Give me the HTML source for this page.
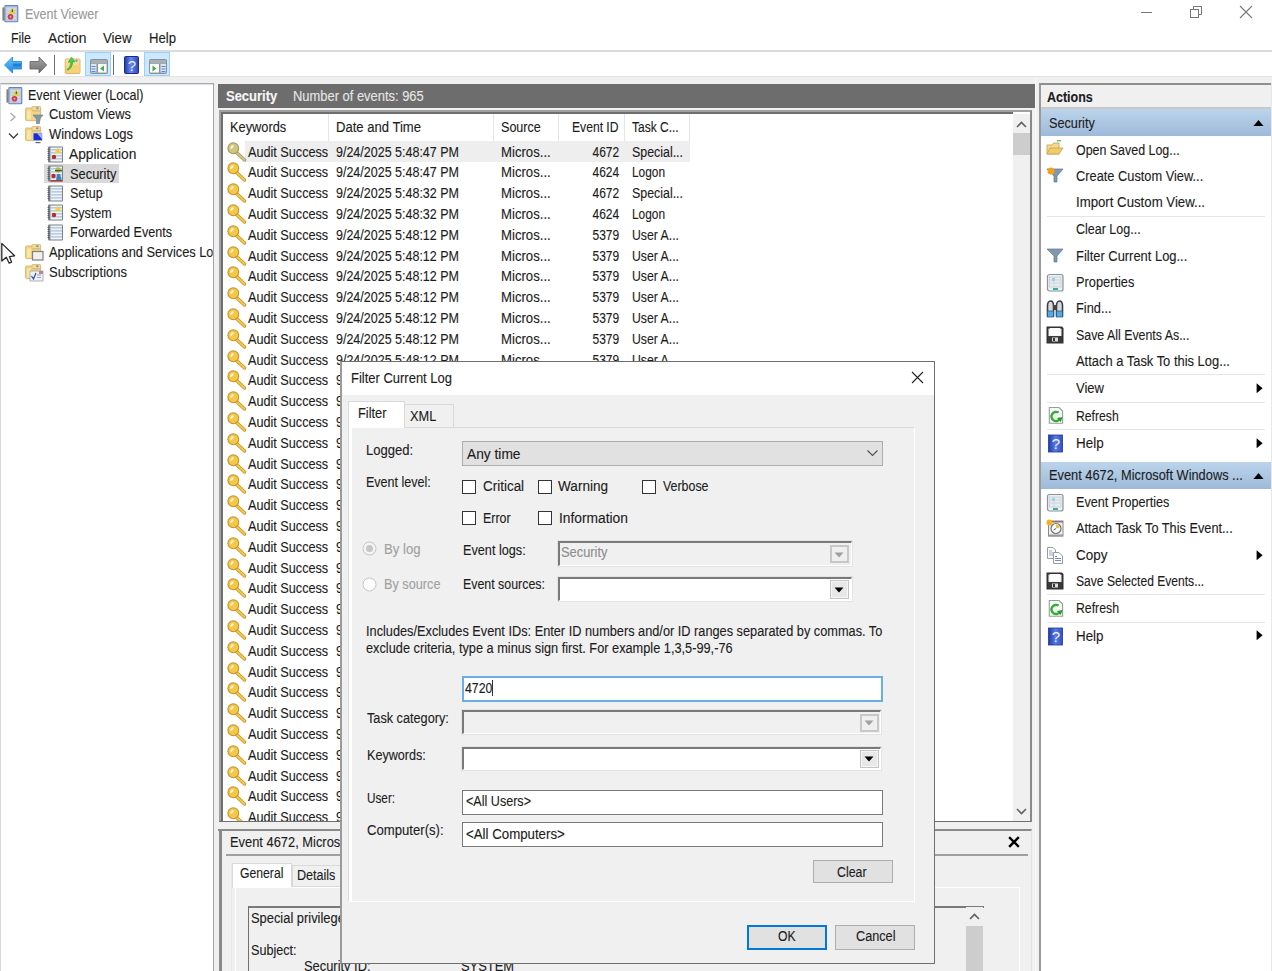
<!DOCTYPE html><html><head><meta charset="utf-8"><style>
*{margin:0;padding:0;box-sizing:border-box}
html,body{width:1272px;height:971px;overflow:hidden;background:#fff}
body{position:relative;font-family:"Liberation Sans",sans-serif;font-size:14px;color:#1c1c1c}
.t{position:absolute;white-space:nowrap;line-height:16px;transform-origin:0 0;-webkit-text-stroke:0.12px currentColor}
.r{position:absolute}
</style></head><body>
<svg class="r" style="left:2px;top:5px;" width="17" height="18" viewBox="0 0 17 18"><rect x="2.8" y="0.6" width="13" height="16.2" rx="0.8" fill="#b8cce6" stroke="#6a80b8" stroke-width="1.1"/><path d="M4.5 4 H14 M4.5 7 H14 M4.5 10 H14 M4.5 13 H14" stroke="#dce8f4" stroke-width="1"/><rect x="0.5" y="2" width="2.5" height="14" fill="#a8a8a8"/><path d="M0.5 4 h2 M0.5 6 h2 M0.5 8 h2 M0.5 10 h2 M0.5 12 h2 M0.5 14 h2" stroke="#444" stroke-width="0.8"/><path d="M10.3 2.3 L13.8 8.6 H6.9Z" fill="#ecd020"/><path d="M10.3 4.5 V7" stroke="#333" stroke-width="1"/><circle cx="8.5" cy="11.8" r="2.8" fill="#d83838"/><circle cx="8.5" cy="11.8" r="1" fill="#f0b0b0"/></svg>
<div class="t" style="left:25px;top:6px;transform:scaleX(0.8938);color:#999;">Event Viewer</div>
<div class="r" style="left:1141px;top:12px;width:11px;height:1px;background:#777"></div>
<svg class="r" style="left:1189px;top:5px;" width="14" height="14" viewBox="0 0 14 14"><rect x="1.5" y="4.5" width="8" height="8" fill="none" stroke="#777"/><path d="M4.5 4.5 V1.5 H12.5 V9.5 H9.5" fill="none" stroke="#777"/></svg>
<svg class="r" style="left:1239px;top:5px;" width="14" height="14" viewBox="0 0 14 14"><path d="M1 1 L13 13 M13 1 L1 13" stroke="#777" stroke-width="1.1"/></svg>
<div class="t" style="left:11px;top:30px;transform:scaleX(0.8864);">File</div>
<div class="t" style="left:47.5px;top:30px;transform:scaleX(0.9892);">Action</div>
<div class="t" style="left:103px;top:30px;transform:scaleX(0.9470);">View</div>
<div class="t" style="left:148.5px;top:30px;transform:scaleX(0.9376);">Help</div>
<div class="r" style="left:0px;top:50px;width:1272px;height:2px;background:#dadbdc"></div>
<svg class="r" style="left:3px;top:55px;" width="21" height="19" viewBox="0 0 21 19"><defs><linearGradient id="gb" x1="0" y1="0" x2="0" y2="1"><stop offset="0" stop-color="#6cc4fa"/><stop offset="1" stop-color="#1a86e0"/></linearGradient></defs><path d="M1.6 10 L9.5 2 V6.5 H18.5 V14 H9.5 V18 Z" fill="url(#gb)" stroke="#2a8ee0" stroke-width="0.9" stroke-linejoin="round"/><rect x="10" y="8.5" width="8" height="3" fill="#0a68c8" opacity="0.6"/></svg>
<svg class="r" style="left:28px;top:55px;" width="21" height="19" viewBox="0 0 21 19"><defs><linearGradient id="gg" x1="0" y1="0" x2="0" y2="1"><stop offset="0" stop-color="#a8a8a8"/><stop offset="1" stop-color="#6c6c6c"/></linearGradient></defs><path d="M18.7 10 L11 2 V6.5 H2 V14 H11 V18 Z" fill="url(#gg)" stroke="#6a6a6a" stroke-width="0.9" stroke-linejoin="round"/></svg>
<div class="r" style="left:54px;top:55px;width:1px;height:20px;background:#6d6d6d"></div>
<svg class="r" style="left:64px;top:55px;" width="18" height="20" viewBox="0 0 18 20"><defs><linearGradient id="gf" x1="0" y1="0" x2="0" y2="1"><stop offset="0" stop-color="#fbe6a8"/><stop offset="1" stop-color="#eec868"/></linearGradient></defs><rect x="1.2" y="4" width="14.8" height="14.5" rx="1" fill="url(#gf)" stroke="#d8b060" stroke-width="0.9"/><path d="M9 10 H15.5 V18 H3Z" fill="#f5d27a"/><path d="M3 14.5 C5 13.5 6.5 11 7 7 L4.3 7.3 L7.6 2.3 L11 6.8 L8.6 6.9 C8.4 11.5 6.5 14 3.5 15.2Z" fill="#4cd040" stroke="#30a830" stroke-width="0.7"/><circle cx="12.5" cy="5.7" r="1.2" fill="#7aa0d0"/></svg>
<div class="r" style="left:85px;top:52px;width:26px;height:24px;background:#cce8ff;border:1px solid #99d1ff"></div>
<svg class="r" style="left:89.5px;top:58.5px;" width="18" height="15" viewBox="0 0 18 15"><rect x="0.5" y="0.5" width="17" height="14" rx="1" fill="#9aa2aa" stroke="#8a9098"/><rect x="1" y="1" width="16" height="3.5" fill="#a6aeb6"/><rect x="1" y="5" width="6" height="8.5" fill="#dfe4ee"/><rect x="6.5" y="5" width="1.5" height="8.5" fill="#8a9098"/><rect x="8" y="5" width="8.5" height="8.5" fill="#fafafa"/><path d="M14 6.5 L10 9.5 L14 12.5Z" fill="#40b040"/><path d="M1.5 7.5 h4" stroke="#4a90d8" stroke-width="1"/><path d="M1.5 10 h4" stroke="#4a90d8" stroke-width="1"/><path d="M1.5 12.5 h4" stroke="#4a90d8" stroke-width="1"/></svg>
<div class="r" style="left:113px;top:55px;width:1px;height:20px;background:#6d6d6d"></div>
<svg class="r" style="left:123.5px;top:56px;" width="15" height="18" viewBox="0 0 15 18"><defs><linearGradient id="gh" x1="0" y1="0" x2="1" y2="0"><stop offset="0" stop-color="#1c3aa8"/><stop offset="0.45" stop-color="#6a88e8"/><stop offset="1" stop-color="#2a48c0"/></linearGradient></defs><rect x="0.5" y="0.5" width="14" height="17" rx="1" fill="url(#gh)" stroke="#1a2c88"/><text x="7.8" y="14.5" font-size="15" font-family="Liberation Sans" fill="#e8eeff" text-anchor="middle">?</text></svg>
<div class="r" style="left:144px;top:52px;width:26px;height:24px;background:#cce8ff;border:1px solid #99d1ff"></div>
<svg class="r" style="left:148.5px;top:58.5px;" width="18" height="15" viewBox="0 0 18 15"><rect x="0.5" y="0.5" width="17" height="14" rx="1" fill="#9aa2aa" stroke="#8a9098"/><rect x="1" y="1" width="16" height="3.5" fill="#a6aeb6"/><rect x="1" y="5" width="9" height="8.5" fill="#fafafa"/><rect x="10" y="5" width="1.5" height="8.5" fill="#8a9098"/><rect x="11.5" y="5" width="5.5" height="8.5" fill="#dfe4ee"/><path d="M3.5 6.5 L7.5 9.5 L3.5 12.5Z" fill="#40b040"/><path d="M12.5 7.5 h4" stroke="#4a90d8" stroke-width="1"/><path d="M12.5 10 h4" stroke="#4a90d8" stroke-width="1"/><path d="M12.5 12.5 h4" stroke="#4a90d8" stroke-width="1"/></svg>
<div class="r" style="left:0px;top:76px;width:1272px;height:1px;background:#e3e3e3"></div>
<div class="r" style="left:0px;top:77px;width:1272px;height:894px;background:#f0f0f0"></div>
<div class="r" style="left:0px;top:83px;width:214px;height:888px;background:#fff;border-top:1px solid #a6abb2;border-left:1px solid #d6d8db;border-right:1px solid #a0a4ab"></div>
<div class="r" style="left:1px;top:84px;width:212px;height:1px;background:#dfe1e4"></div>
<svg class="r" style="left:6px;top:87px;" width="17" height="18" viewBox="0 0 17 18"><rect x="2.8" y="0.6" width="13" height="16.2" rx="0.8" fill="#b8cce6" stroke="#6a80b8" stroke-width="1.1"/><path d="M4.5 4 H14 M4.5 7 H14 M4.5 10 H14 M4.5 13 H14" stroke="#dce8f4" stroke-width="1"/><rect x="0.5" y="2" width="2.5" height="14" fill="#a8a8a8"/><path d="M0.5 4 h2 M0.5 6 h2 M0.5 8 h2 M0.5 10 h2 M0.5 12 h2 M0.5 14 h2" stroke="#444" stroke-width="0.8"/><path d="M10.3 2.3 L13.8 8.6 H6.9Z" fill="#ecd020"/><path d="M10.3 4.5 V7" stroke="#333" stroke-width="1"/><circle cx="8.5" cy="11.8" r="2.8" fill="#d83838"/><circle cx="8.5" cy="11.8" r="1" fill="#f0b0b0"/></svg>
<div class="t" style="left:28px;top:87px;transform:scaleX(0.8959);">Event Viewer (Local)</div>
<svg class="r" style="left:9px;top:112px;" width="8" height="10" viewBox="0 0 8 10"><path d="M1.5 1 L6 5 L1.5 9" fill="none" stroke="#a6a6a6" stroke-width="1.3"/></svg>
<svg class="r" style="left:25px;top:106px;" width="20" height="19" viewBox="0 0 20 19"><rect x="0.6" y="2" width="15" height="12.6" rx="1" fill="#f2d483" stroke="#d8b468" stroke-width="0.9"/><rect x="2" y="4.5" width="4" height="9" fill="#f8e6a8"/><rect x="7" y="0.5" width="8.6" height="4" rx="0.8" fill="#f4dc98" stroke="#d8b468" stroke-width="0.8"/><ellipse cx="12.3" cy="2.3" rx="1.4" ry="1" fill="#6a9ad0"/><rect x="7" y="4.6" width="8.6" height="1" fill="#dcc080"/><path d="M8 9 H18 L14.5 13 V17.5 H11.5 V13Z" fill="#8098b0" stroke="#607890" stroke-width="0.6"/></svg>
<div class="t" style="left:48.5px;top:106px;transform:scaleX(0.9191);">Custom Views</div>
<svg class="r" style="left:8px;top:132px;" width="11" height="8" viewBox="0 0 11 8"><path d="M1 1.5 L5.5 6 L10 1.5" fill="none" stroke="#404040" stroke-width="1.4"/></svg>
<svg class="r" style="left:25px;top:126px;" width="20" height="19" viewBox="0 0 20 19"><rect x="0.6" y="2" width="15" height="12.6" rx="1" fill="#f2d483" stroke="#d8b468" stroke-width="0.9"/><rect x="2" y="4.5" width="4" height="9" fill="#f8e6a8"/><rect x="7" y="0.5" width="8.6" height="4" rx="0.8" fill="#f4dc98" stroke="#d8b468" stroke-width="0.8"/><ellipse cx="12.3" cy="2.3" rx="1.4" ry="1" fill="#6a9ad0"/><rect x="7" y="4.6" width="8.6" height="1" fill="#dcc080"/><rect x="7.7" y="6.5" width="10" height="8.5" fill="#d8d8d8"/><rect x="8.5" y="7.3" width="8.4" height="7" fill="#1a30d0"/><path d="M12 7.3 L16.9 7.3 V13 Z" fill="#a8b8f0"/><rect x="10.5" y="16" width="5" height="1.2" fill="#666"/></svg>
<div class="t" style="left:48.5px;top:126px;transform:scaleX(0.9226);">Windows Logs</div>
<div class="t" style="left:69px;top:146px;transform:scaleX(0.9825);">Application</div>
<div class="r" style="left:44px;top:164px;width:75px;height:19px;background:#d9d9d9"></div>
<svg class="r" style="left:47px;top:146px;" width="17" height="17" viewBox="0 0 17 17"><rect x="1" y="0.5" width="15" height="16" rx="1" fill="#7c8088"/><rect x="3.5" y="1.5" width="11.5" height="14" fill="#eef4fa"/><rect x="3.5" y="3" width="11.5" height="1.6" fill="#b8cce0"/><rect x="3.5" y="6" width="11.5" height="1.6" fill="#b8cce0"/><rect x="3.5" y="9" width="11.5" height="1.6" fill="#b8cce0"/><rect x="3.5" y="12" width="11.5" height="1.6" fill="#b8cce0"/><rect x="0.5" y="3" width="2" height="0.8" fill="#555"/><rect x="0.5" y="5" width="2" height="0.8" fill="#555"/><rect x="0.5" y="7" width="2" height="0.8" fill="#555"/><rect x="0.5" y="9" width="2" height="0.8" fill="#555"/><rect x="0.5" y="11" width="2" height="0.8" fill="#555"/><rect x="0.5" y="13" width="2" height="0.8" fill="#555"/><path d="M11 1.8 L14.5 7 H7.5Z" fill="#f2d030"/><circle cx="7" cy="11" r="2.2" fill="#c02828"/></svg>
<svg class="r" style="left:47px;top:165px;" width="17" height="17" viewBox="0 0 17 17"><rect x="1" y="0.5" width="15" height="16" rx="1" fill="#7c8088"/><rect x="3.5" y="1.5" width="11.5" height="14" fill="#eef4fa"/><rect x="3.5" y="3" width="11.5" height="1.6" fill="#b8cce0"/><rect x="3.5" y="6" width="11.5" height="1.6" fill="#b8cce0"/><rect x="3.5" y="9" width="11.5" height="1.6" fill="#b8cce0"/><rect x="3.5" y="12" width="11.5" height="1.6" fill="#b8cce0"/><rect x="0.5" y="3" width="2" height="0.8" fill="#555"/><rect x="0.5" y="5" width="2" height="0.8" fill="#555"/><rect x="0.5" y="7" width="2" height="0.8" fill="#555"/><rect x="0.5" y="9" width="2" height="0.8" fill="#555"/><rect x="0.5" y="11" width="2" height="0.8" fill="#555"/><rect x="0.5" y="13" width="2" height="0.8" fill="#555"/><circle cx="11" cy="5" r="2.8" fill="#a8c040"/><rect x="8" y="5" width="7" height="1.2" fill="#505020"/><circle cx="6.5" cy="11" r="2.2" fill="#c02828"/><path d="M9 16 L10 9 H13 L15 16Z" fill="#3c80c8"/><rect x="3.5" y="15" width="12" height="1.5" fill="#a04030"/></svg>
<div class="t" style="left:69.5px;top:166px;transform:scaleX(0.9174);">Security</div>
<svg class="r" style="left:47px;top:185px;" width="17" height="17" viewBox="0 0 17 17"><rect x="1" y="0.5" width="15" height="16" rx="1" fill="#7c8088"/><rect x="3.5" y="1.5" width="11.5" height="14" fill="#eef4fa"/><rect x="3.5" y="3" width="11.5" height="1.6" fill="#b8cce0"/><rect x="3.5" y="6" width="11.5" height="1.6" fill="#b8cce0"/><rect x="3.5" y="9" width="11.5" height="1.6" fill="#b8cce0"/><rect x="3.5" y="12" width="11.5" height="1.6" fill="#b8cce0"/><rect x="0.5" y="3" width="2" height="0.8" fill="#555"/><rect x="0.5" y="5" width="2" height="0.8" fill="#555"/><rect x="0.5" y="7" width="2" height="0.8" fill="#555"/><rect x="0.5" y="9" width="2" height="0.8" fill="#555"/><rect x="0.5" y="11" width="2" height="0.8" fill="#555"/><rect x="0.5" y="13" width="2" height="0.8" fill="#555"/></svg>
<div class="t" style="left:69.5px;top:185px;transform:scaleX(0.8936);">Setup</div>
<svg class="r" style="left:47px;top:204px;" width="17" height="17" viewBox="0 0 17 17"><rect x="1" y="0.5" width="15" height="16" rx="1" fill="#7c8088"/><rect x="3.5" y="1.5" width="11.5" height="14" fill="#eef4fa"/><rect x="3.5" y="3" width="11.5" height="1.6" fill="#b8cce0"/><rect x="3.5" y="6" width="11.5" height="1.6" fill="#b8cce0"/><rect x="3.5" y="9" width="11.5" height="1.6" fill="#b8cce0"/><rect x="3.5" y="12" width="11.5" height="1.6" fill="#b8cce0"/><rect x="0.5" y="3" width="2" height="0.8" fill="#555"/><rect x="0.5" y="5" width="2" height="0.8" fill="#555"/><rect x="0.5" y="7" width="2" height="0.8" fill="#555"/><rect x="0.5" y="9" width="2" height="0.8" fill="#555"/><rect x="0.5" y="11" width="2" height="0.8" fill="#555"/><rect x="0.5" y="13" width="2" height="0.8" fill="#555"/><path d="M11 1.8 L14.5 7 H7.5Z" fill="#f2d030"/><circle cx="7" cy="11" r="2.2" fill="#c02828"/></svg>
<div class="t" style="left:69.5px;top:205px;transform:scaleX(0.8932);">System</div>
<svg class="r" style="left:47px;top:224px;" width="17" height="17" viewBox="0 0 17 17"><rect x="1" y="0.5" width="15" height="16" rx="1" fill="#7c8088"/><rect x="3.5" y="1.5" width="11.5" height="14" fill="#eef4fa"/><rect x="3.5" y="3" width="11.5" height="1.6" fill="#b8cce0"/><rect x="3.5" y="6" width="11.5" height="1.6" fill="#b8cce0"/><rect x="3.5" y="9" width="11.5" height="1.6" fill="#b8cce0"/><rect x="3.5" y="12" width="11.5" height="1.6" fill="#b8cce0"/><rect x="0.5" y="3" width="2" height="0.8" fill="#555"/><rect x="0.5" y="5" width="2" height="0.8" fill="#555"/><rect x="0.5" y="7" width="2" height="0.8" fill="#555"/><rect x="0.5" y="9" width="2" height="0.8" fill="#555"/><rect x="0.5" y="11" width="2" height="0.8" fill="#555"/><rect x="0.5" y="13" width="2" height="0.8" fill="#555"/></svg>
<div class="t" style="left:69.5px;top:224px;transform:scaleX(0.8978);">Forwarded Events</div>
<svg class="r" style="left:25px;top:244px;" width="20" height="19" viewBox="0 0 20 19"><rect x="0.6" y="2" width="15" height="12.6" rx="1" fill="#f2d483" stroke="#d8b468" stroke-width="0.9"/><rect x="2" y="4.5" width="4" height="9" fill="#f8e6a8"/><rect x="7" y="0.5" width="8.6" height="4" rx="0.8" fill="#f4dc98" stroke="#d8b468" stroke-width="0.8"/><ellipse cx="12.3" cy="2.3" rx="1.4" ry="1" fill="#6a9ad0"/><rect x="7" y="4.6" width="8.6" height="1" fill="#dcc080"/><rect x="7.5" y="7.5" width="10.5" height="8.5" fill="#f0f0f0" stroke="#808080" stroke-width="1.2"/></svg>
<div class="t" style="left:49px;top:244px;transform:scaleX(0.9149);overflow:hidden;width:179.26px;">Applications and Services Logs</div>
<svg class="r" style="left:25px;top:264px;" width="20" height="19" viewBox="0 0 20 19"><rect x="0.6" y="2" width="15" height="12.6" rx="1" fill="#f2d483" stroke="#d8b468" stroke-width="0.9"/><rect x="2" y="4.5" width="4" height="9" fill="#f8e6a8"/><rect x="7" y="0.5" width="8.6" height="4" rx="0.8" fill="#f4dc98" stroke="#d8b468" stroke-width="0.8"/><ellipse cx="12.3" cy="2.3" rx="1.4" ry="1" fill="#6a9ad0"/><rect x="7" y="4.6" width="8.6" height="1" fill="#dcc080"/><rect x="5" y="7" width="13" height="10" fill="#eef2f6" stroke="#a0a0b0" stroke-width="0.8"/><rect x="14" y="7" width="4" height="3" fill="#c080a0"/><path d="M6.5 12 L8.5 15 L11 9" stroke="#2050a0" stroke-width="1.2" fill="none"/><path d="M12 11 h4 M12 13.5 h4" stroke="#8090a0" stroke-width="0.8"/></svg>
<div class="t" style="left:49px;top:264px;transform:scaleX(0.9281);">Subscriptions</div>
<svg class="r" style="left:0px;top:240px;" width="18" height="26" viewBox="0 0 18 26"><path d="M1.8 3.4 L1.8 21 L6.3 17.2 L9.2 23.2 L11.6 22.2 L9.4 16.6 L14.6 15.8 Z" fill="#fff" stroke="#2a2a2a" stroke-width="1.3" stroke-linejoin="round"/></svg>
<div class="r" style="left:214px;top:240px;width:4px;height:25px;background:#f0f0f0"></div>
<div class="r" style="left:213px;top:240px;width:1px;height:25px;background:#a0a4ab"></div>
<div class="r" style="left:218px;top:84px;width:817px;height:24px;background:#6d6d6d"></div>
<div class="t" style="left:225.5px;top:88px;transform:scaleX(0.9267);color:#f7f7f7;font-weight:bold">Security</div>
<div class="t" style="left:293px;top:88px;transform:scaleX(0.9228);color:#e6e6e6">Number of events: 965</div>
<div class="r" style="left:219px;top:110px;width:813px;height:712px;background:#fff;border-top:2px solid #a0a0a0;border-left:2px solid #a0a0a0;border-bottom:1px solid #6e6e6e;border-right:2px solid #8a8a8a"></div>
<div class="r" style="left:221px;top:112px;width:2px;height:710px;background:#6e6e6e"></div>
<div class="r" style="left:221px;top:112px;width:792px;height:2px;background:#6e6e6e"></div>
<div class="r" style="left:328px;top:114px;width:1px;height:27px;background:#e5e5e5"></div>
<div class="r" style="left:493px;top:114px;width:1px;height:27px;background:#e5e5e5"></div>
<div class="r" style="left:558px;top:114px;width:1px;height:27px;background:#e5e5e5"></div>
<div class="r" style="left:624px;top:114px;width:1px;height:27px;background:#e5e5e5"></div>
<div class="r" style="left:689px;top:114px;width:1px;height:27px;background:#e5e5e5"></div>
<div class="t" style="left:230px;top:119px;transform:scaleX(0.9143);">Keywords</div>
<div class="t" style="left:336px;top:119px;transform:scaleX(0.9334);">Date and Time</div>
<div class="t" style="left:500.5px;top:119px;transform:scaleX(0.8972);">Source</div>
<div class="t" style="left:572px;top:119px;transform:scaleX(0.8659);">Event ID</div>
<div class="t" style="left:632px;top:119px;transform:scaleX(0.8574);">Task C...</div>
<div class="r" style="left:1013px;top:114px;width:17px;height:707px;background:#f0f0f0"></div>
<div class="r" style="left:1013px;top:133px;width:17px;height:22px;background:#cdcdcd"></div>
<svg class="r" style="left:1015px;top:120px;" width="13" height="9" viewBox="0 0 13 9"><path d="M2 7 L6.5 2.5 L11 7" fill="none" stroke="#606060" stroke-width="1.6"/></svg>
<svg class="r" style="left:1015px;top:807px;" width="13" height="9" viewBox="0 0 13 9"><path d="M2 2 L6.5 6.5 L11 2" fill="none" stroke="#606060" stroke-width="1.6"/></svg>
<div class="r" style="left:245px;top:141px;width:445px;height:21px;background:#eeeeee"></div>
<svg class="r" style="left:227px;top:141.5px;" width="20" height="20" viewBox="0 0 20 20"><path d="M8.5 9.5 L17.5 18" stroke="#a09a68" stroke-width="3.4" stroke-linecap="round"/><path d="M8.5 9.5 L17.5 18" stroke="#d2c67c" stroke-width="1.8" stroke-linecap="round"/><circle cx="6.3" cy="6.3" r="5.4" fill="#d2c67c" stroke="#a09a68" stroke-width="1.1"/><ellipse cx="5" cy="5" rx="2.2" ry="1.3" transform="rotate(-50 5 5)" fill="#fff" opacity="0.75"/></svg>
<div class="t" style="left:248px;top:144px;transform:scaleX(0.9040);">Audit Success</div>
<div class="t" style="left:336px;top:144px;transform:scaleX(0.8927);">9/24/2025 5:48:47 PM</div>
<div class="t" style="left:500.5px;top:144px;transform:scaleX(0.9397);">Micros...</div>
<div class="t" style="left:587.64px;top:144px;transform-origin:100% 0;transform:scaleX(0.8570);">4672</div>
<div class="t" style="left:632px;top:144px;transform:scaleX(0.8855);">Special...</div>
<svg class="r" style="left:227px;top:162.3px;" width="20" height="20" viewBox="0 0 20 20"><path d="M8.5 9.5 L17.5 18" stroke="#c89430" stroke-width="3.4" stroke-linecap="round"/><path d="M8.5 9.5 L17.5 18" stroke="#f4c844" stroke-width="1.8" stroke-linecap="round"/><circle cx="6.3" cy="6.3" r="5.4" fill="#f4c844" stroke="#c89430" stroke-width="1.1"/><ellipse cx="5" cy="5" rx="2.2" ry="1.3" transform="rotate(-50 5 5)" fill="#fff" opacity="0.75"/></svg>
<div class="t" style="left:248px;top:164px;transform:scaleX(0.9040);">Audit Success</div>
<div class="t" style="left:336px;top:164px;transform:scaleX(0.8927);">9/24/2025 5:48:47 PM</div>
<div class="t" style="left:500.5px;top:164px;transform:scaleX(0.9397);">Micros...</div>
<div class="t" style="left:587.64px;top:164px;transform-origin:100% 0;transform:scaleX(0.8570);">4624</div>
<div class="t" style="left:632px;top:164px;transform:scaleX(0.8475);">Logon</div>
<svg class="r" style="left:227px;top:183.1px;" width="20" height="20" viewBox="0 0 20 20"><path d="M8.5 9.5 L17.5 18" stroke="#c89430" stroke-width="3.4" stroke-linecap="round"/><path d="M8.5 9.5 L17.5 18" stroke="#f4c844" stroke-width="1.8" stroke-linecap="round"/><circle cx="6.3" cy="6.3" r="5.4" fill="#f4c844" stroke="#c89430" stroke-width="1.1"/><ellipse cx="5" cy="5" rx="2.2" ry="1.3" transform="rotate(-50 5 5)" fill="#fff" opacity="0.75"/></svg>
<div class="t" style="left:248px;top:185px;transform:scaleX(0.9040);">Audit Success</div>
<div class="t" style="left:336px;top:185px;transform:scaleX(0.8927);">9/24/2025 5:48:32 PM</div>
<div class="t" style="left:500.5px;top:185px;transform:scaleX(0.9397);">Micros...</div>
<div class="t" style="left:587.64px;top:185px;transform-origin:100% 0;transform:scaleX(0.8570);">4672</div>
<div class="t" style="left:632px;top:185px;transform:scaleX(0.8855);">Special...</div>
<svg class="r" style="left:227px;top:203.9px;" width="20" height="20" viewBox="0 0 20 20"><path d="M8.5 9.5 L17.5 18" stroke="#c89430" stroke-width="3.4" stroke-linecap="round"/><path d="M8.5 9.5 L17.5 18" stroke="#f4c844" stroke-width="1.8" stroke-linecap="round"/><circle cx="6.3" cy="6.3" r="5.4" fill="#f4c844" stroke="#c89430" stroke-width="1.1"/><ellipse cx="5" cy="5" rx="2.2" ry="1.3" transform="rotate(-50 5 5)" fill="#fff" opacity="0.75"/></svg>
<div class="t" style="left:248px;top:206px;transform:scaleX(0.9040);">Audit Success</div>
<div class="t" style="left:336px;top:206px;transform:scaleX(0.8927);">9/24/2025 5:48:32 PM</div>
<div class="t" style="left:500.5px;top:206px;transform:scaleX(0.9397);">Micros...</div>
<div class="t" style="left:587.64px;top:206px;transform-origin:100% 0;transform:scaleX(0.8570);">4624</div>
<div class="t" style="left:632px;top:206px;transform:scaleX(0.8475);">Logon</div>
<svg class="r" style="left:227px;top:224.7px;" width="20" height="20" viewBox="0 0 20 20"><path d="M8.5 9.5 L17.5 18" stroke="#c89430" stroke-width="3.4" stroke-linecap="round"/><path d="M8.5 9.5 L17.5 18" stroke="#f4c844" stroke-width="1.8" stroke-linecap="round"/><circle cx="6.3" cy="6.3" r="5.4" fill="#f4c844" stroke="#c89430" stroke-width="1.1"/><ellipse cx="5" cy="5" rx="2.2" ry="1.3" transform="rotate(-50 5 5)" fill="#fff" opacity="0.75"/></svg>
<div class="t" style="left:248px;top:227px;transform:scaleX(0.9040);">Audit Success</div>
<div class="t" style="left:336px;top:227px;transform:scaleX(0.8927);">9/24/2025 5:48:12 PM</div>
<div class="t" style="left:500.5px;top:227px;transform:scaleX(0.9397);">Micros...</div>
<div class="t" style="left:587.64px;top:227px;transform-origin:100% 0;transform:scaleX(0.8570);">5379</div>
<div class="t" style="left:632px;top:227px;transform:scaleX(0.8754);">User A...</div>
<svg class="r" style="left:227px;top:245.5px;" width="20" height="20" viewBox="0 0 20 20"><path d="M8.5 9.5 L17.5 18" stroke="#c89430" stroke-width="3.4" stroke-linecap="round"/><path d="M8.5 9.5 L17.5 18" stroke="#f4c844" stroke-width="1.8" stroke-linecap="round"/><circle cx="6.3" cy="6.3" r="5.4" fill="#f4c844" stroke="#c89430" stroke-width="1.1"/><ellipse cx="5" cy="5" rx="2.2" ry="1.3" transform="rotate(-50 5 5)" fill="#fff" opacity="0.75"/></svg>
<div class="t" style="left:248px;top:248px;transform:scaleX(0.9040);">Audit Success</div>
<div class="t" style="left:336px;top:248px;transform:scaleX(0.8927);">9/24/2025 5:48:12 PM</div>
<div class="t" style="left:500.5px;top:248px;transform:scaleX(0.9397);">Micros...</div>
<div class="t" style="left:587.64px;top:248px;transform-origin:100% 0;transform:scaleX(0.8570);">5379</div>
<div class="t" style="left:632px;top:248px;transform:scaleX(0.8754);">User A...</div>
<svg class="r" style="left:227px;top:266.3px;" width="20" height="20" viewBox="0 0 20 20"><path d="M8.5 9.5 L17.5 18" stroke="#c89430" stroke-width="3.4" stroke-linecap="round"/><path d="M8.5 9.5 L17.5 18" stroke="#f4c844" stroke-width="1.8" stroke-linecap="round"/><circle cx="6.3" cy="6.3" r="5.4" fill="#f4c844" stroke="#c89430" stroke-width="1.1"/><ellipse cx="5" cy="5" rx="2.2" ry="1.3" transform="rotate(-50 5 5)" fill="#fff" opacity="0.75"/></svg>
<div class="t" style="left:248px;top:268px;transform:scaleX(0.9040);">Audit Success</div>
<div class="t" style="left:336px;top:268px;transform:scaleX(0.8927);">9/24/2025 5:48:12 PM</div>
<div class="t" style="left:500.5px;top:268px;transform:scaleX(0.9397);">Micros...</div>
<div class="t" style="left:587.64px;top:268px;transform-origin:100% 0;transform:scaleX(0.8570);">5379</div>
<div class="t" style="left:632px;top:268px;transform:scaleX(0.8754);">User A...</div>
<svg class="r" style="left:227px;top:287.1px;" width="20" height="20" viewBox="0 0 20 20"><path d="M8.5 9.5 L17.5 18" stroke="#c89430" stroke-width="3.4" stroke-linecap="round"/><path d="M8.5 9.5 L17.5 18" stroke="#f4c844" stroke-width="1.8" stroke-linecap="round"/><circle cx="6.3" cy="6.3" r="5.4" fill="#f4c844" stroke="#c89430" stroke-width="1.1"/><ellipse cx="5" cy="5" rx="2.2" ry="1.3" transform="rotate(-50 5 5)" fill="#fff" opacity="0.75"/></svg>
<div class="t" style="left:248px;top:289px;transform:scaleX(0.9040);">Audit Success</div>
<div class="t" style="left:336px;top:289px;transform:scaleX(0.8927);">9/24/2025 5:48:12 PM</div>
<div class="t" style="left:500.5px;top:289px;transform:scaleX(0.9397);">Micros...</div>
<div class="t" style="left:587.64px;top:289px;transform-origin:100% 0;transform:scaleX(0.8570);">5379</div>
<div class="t" style="left:632px;top:289px;transform:scaleX(0.8754);">User A...</div>
<svg class="r" style="left:227px;top:307.9px;" width="20" height="20" viewBox="0 0 20 20"><path d="M8.5 9.5 L17.5 18" stroke="#c89430" stroke-width="3.4" stroke-linecap="round"/><path d="M8.5 9.5 L17.5 18" stroke="#f4c844" stroke-width="1.8" stroke-linecap="round"/><circle cx="6.3" cy="6.3" r="5.4" fill="#f4c844" stroke="#c89430" stroke-width="1.1"/><ellipse cx="5" cy="5" rx="2.2" ry="1.3" transform="rotate(-50 5 5)" fill="#fff" opacity="0.75"/></svg>
<div class="t" style="left:248px;top:310px;transform:scaleX(0.9040);">Audit Success</div>
<div class="t" style="left:336px;top:310px;transform:scaleX(0.8927);">9/24/2025 5:48:12 PM</div>
<div class="t" style="left:500.5px;top:310px;transform:scaleX(0.9397);">Micros...</div>
<div class="t" style="left:587.64px;top:310px;transform-origin:100% 0;transform:scaleX(0.8570);">5379</div>
<div class="t" style="left:632px;top:310px;transform:scaleX(0.8754);">User A...</div>
<svg class="r" style="left:227px;top:328.70000000000005px;" width="20" height="20" viewBox="0 0 20 20"><path d="M8.5 9.5 L17.5 18" stroke="#c89430" stroke-width="3.4" stroke-linecap="round"/><path d="M8.5 9.5 L17.5 18" stroke="#f4c844" stroke-width="1.8" stroke-linecap="round"/><circle cx="6.3" cy="6.3" r="5.4" fill="#f4c844" stroke="#c89430" stroke-width="1.1"/><ellipse cx="5" cy="5" rx="2.2" ry="1.3" transform="rotate(-50 5 5)" fill="#fff" opacity="0.75"/></svg>
<div class="t" style="left:248px;top:331px;transform:scaleX(0.9040);">Audit Success</div>
<div class="t" style="left:336px;top:331px;transform:scaleX(0.8927);">9/24/2025 5:48:12 PM</div>
<div class="t" style="left:500.5px;top:331px;transform:scaleX(0.9397);">Micros...</div>
<div class="t" style="left:587.64px;top:331px;transform-origin:100% 0;transform:scaleX(0.8570);">5379</div>
<div class="t" style="left:632px;top:331px;transform:scaleX(0.8754);">User A...</div>
<svg class="r" style="left:227px;top:349.5px;" width="20" height="20" viewBox="0 0 20 20"><path d="M8.5 9.5 L17.5 18" stroke="#c89430" stroke-width="3.4" stroke-linecap="round"/><path d="M8.5 9.5 L17.5 18" stroke="#f4c844" stroke-width="1.8" stroke-linecap="round"/><circle cx="6.3" cy="6.3" r="5.4" fill="#f4c844" stroke="#c89430" stroke-width="1.1"/><ellipse cx="5" cy="5" rx="2.2" ry="1.3" transform="rotate(-50 5 5)" fill="#fff" opacity="0.75"/></svg>
<div class="t" style="left:248px;top:352px;transform:scaleX(0.9040);">Audit Success</div>
<div class="t" style="left:336px;top:352px;transform:scaleX(0.8927);">9/24/2025 5:48:12 PM</div>
<div class="t" style="left:500.5px;top:352px;transform:scaleX(0.9397);">Micros...</div>
<div class="t" style="left:587.64px;top:352px;transform-origin:100% 0;transform:scaleX(0.8570);">5379</div>
<div class="t" style="left:632px;top:352px;transform:scaleX(0.8754);">User A...</div>
<svg class="r" style="left:227px;top:370.3px;" width="20" height="20" viewBox="0 0 20 20"><path d="M8.5 9.5 L17.5 18" stroke="#c89430" stroke-width="3.4" stroke-linecap="round"/><path d="M8.5 9.5 L17.5 18" stroke="#f4c844" stroke-width="1.8" stroke-linecap="round"/><circle cx="6.3" cy="6.3" r="5.4" fill="#f4c844" stroke="#c89430" stroke-width="1.1"/><ellipse cx="5" cy="5" rx="2.2" ry="1.3" transform="rotate(-50 5 5)" fill="#fff" opacity="0.75"/></svg>
<div class="t" style="left:248px;top:372px;transform:scaleX(0.9040);">Audit Success</div>
<div class="t" style="left:336px;top:372px;transform:scaleX(0.8927);">9/24/2025 5:48:12 PM</div>
<div class="t" style="left:500.5px;top:372px;transform:scaleX(0.9397);">Micros...</div>
<div class="t" style="left:587.64px;top:372px;transform-origin:100% 0;transform:scaleX(0.8570);">5379</div>
<div class="t" style="left:632px;top:372px;transform:scaleX(0.8754);">User A...</div>
<svg class="r" style="left:227px;top:391.1px;" width="20" height="20" viewBox="0 0 20 20"><path d="M8.5 9.5 L17.5 18" stroke="#c89430" stroke-width="3.4" stroke-linecap="round"/><path d="M8.5 9.5 L17.5 18" stroke="#f4c844" stroke-width="1.8" stroke-linecap="round"/><circle cx="6.3" cy="6.3" r="5.4" fill="#f4c844" stroke="#c89430" stroke-width="1.1"/><ellipse cx="5" cy="5" rx="2.2" ry="1.3" transform="rotate(-50 5 5)" fill="#fff" opacity="0.75"/></svg>
<div class="t" style="left:248px;top:393px;transform:scaleX(0.9040);">Audit Success</div>
<div class="t" style="left:336px;top:393px;transform:scaleX(0.8927);">9/24/2025 5:48:12 PM</div>
<div class="t" style="left:500.5px;top:393px;transform:scaleX(0.9397);">Micros...</div>
<div class="t" style="left:587.64px;top:393px;transform-origin:100% 0;transform:scaleX(0.8570);">5379</div>
<div class="t" style="left:632px;top:393px;transform:scaleX(0.8754);">User A...</div>
<svg class="r" style="left:227px;top:411.90000000000003px;" width="20" height="20" viewBox="0 0 20 20"><path d="M8.5 9.5 L17.5 18" stroke="#c89430" stroke-width="3.4" stroke-linecap="round"/><path d="M8.5 9.5 L17.5 18" stroke="#f4c844" stroke-width="1.8" stroke-linecap="round"/><circle cx="6.3" cy="6.3" r="5.4" fill="#f4c844" stroke="#c89430" stroke-width="1.1"/><ellipse cx="5" cy="5" rx="2.2" ry="1.3" transform="rotate(-50 5 5)" fill="#fff" opacity="0.75"/></svg>
<div class="t" style="left:248px;top:414px;transform:scaleX(0.9040);">Audit Success</div>
<div class="t" style="left:336px;top:414px;transform:scaleX(0.8927);">9/24/2025 5:48:12 PM</div>
<div class="t" style="left:500.5px;top:414px;transform:scaleX(0.9397);">Micros...</div>
<div class="t" style="left:587.64px;top:414px;transform-origin:100% 0;transform:scaleX(0.8570);">5379</div>
<div class="t" style="left:632px;top:414px;transform:scaleX(0.8754);">User A...</div>
<svg class="r" style="left:227px;top:432.7px;" width="20" height="20" viewBox="0 0 20 20"><path d="M8.5 9.5 L17.5 18" stroke="#c89430" stroke-width="3.4" stroke-linecap="round"/><path d="M8.5 9.5 L17.5 18" stroke="#f4c844" stroke-width="1.8" stroke-linecap="round"/><circle cx="6.3" cy="6.3" r="5.4" fill="#f4c844" stroke="#c89430" stroke-width="1.1"/><ellipse cx="5" cy="5" rx="2.2" ry="1.3" transform="rotate(-50 5 5)" fill="#fff" opacity="0.75"/></svg>
<div class="t" style="left:248px;top:435px;transform:scaleX(0.9040);">Audit Success</div>
<div class="t" style="left:336px;top:435px;transform:scaleX(0.8927);">9/24/2025 5:48:12 PM</div>
<div class="t" style="left:500.5px;top:435px;transform:scaleX(0.9397);">Micros...</div>
<div class="t" style="left:587.64px;top:435px;transform-origin:100% 0;transform:scaleX(0.8570);">5379</div>
<div class="t" style="left:632px;top:435px;transform:scaleX(0.8754);">User A...</div>
<svg class="r" style="left:227px;top:453.5px;" width="20" height="20" viewBox="0 0 20 20"><path d="M8.5 9.5 L17.5 18" stroke="#c89430" stroke-width="3.4" stroke-linecap="round"/><path d="M8.5 9.5 L17.5 18" stroke="#f4c844" stroke-width="1.8" stroke-linecap="round"/><circle cx="6.3" cy="6.3" r="5.4" fill="#f4c844" stroke="#c89430" stroke-width="1.1"/><ellipse cx="5" cy="5" rx="2.2" ry="1.3" transform="rotate(-50 5 5)" fill="#fff" opacity="0.75"/></svg>
<div class="t" style="left:248px;top:456px;transform:scaleX(0.9040);">Audit Success</div>
<div class="t" style="left:336px;top:456px;transform:scaleX(0.8927);">9/24/2025 5:48:12 PM</div>
<div class="t" style="left:500.5px;top:456px;transform:scaleX(0.9397);">Micros...</div>
<div class="t" style="left:587.64px;top:456px;transform-origin:100% 0;transform:scaleX(0.8570);">5379</div>
<div class="t" style="left:632px;top:456px;transform:scaleX(0.8754);">User A...</div>
<svg class="r" style="left:227px;top:474.3px;" width="20" height="20" viewBox="0 0 20 20"><path d="M8.5 9.5 L17.5 18" stroke="#c89430" stroke-width="3.4" stroke-linecap="round"/><path d="M8.5 9.5 L17.5 18" stroke="#f4c844" stroke-width="1.8" stroke-linecap="round"/><circle cx="6.3" cy="6.3" r="5.4" fill="#f4c844" stroke="#c89430" stroke-width="1.1"/><ellipse cx="5" cy="5" rx="2.2" ry="1.3" transform="rotate(-50 5 5)" fill="#fff" opacity="0.75"/></svg>
<div class="t" style="left:248px;top:476px;transform:scaleX(0.9040);">Audit Success</div>
<div class="t" style="left:336px;top:476px;transform:scaleX(0.8927);">9/24/2025 5:48:12 PM</div>
<div class="t" style="left:500.5px;top:476px;transform:scaleX(0.9397);">Micros...</div>
<div class="t" style="left:587.64px;top:476px;transform-origin:100% 0;transform:scaleX(0.8570);">5379</div>
<div class="t" style="left:632px;top:476px;transform:scaleX(0.8754);">User A...</div>
<svg class="r" style="left:227px;top:495.1px;" width="20" height="20" viewBox="0 0 20 20"><path d="M8.5 9.5 L17.5 18" stroke="#c89430" stroke-width="3.4" stroke-linecap="round"/><path d="M8.5 9.5 L17.5 18" stroke="#f4c844" stroke-width="1.8" stroke-linecap="round"/><circle cx="6.3" cy="6.3" r="5.4" fill="#f4c844" stroke="#c89430" stroke-width="1.1"/><ellipse cx="5" cy="5" rx="2.2" ry="1.3" transform="rotate(-50 5 5)" fill="#fff" opacity="0.75"/></svg>
<div class="t" style="left:248px;top:497px;transform:scaleX(0.9040);">Audit Success</div>
<div class="t" style="left:336px;top:497px;transform:scaleX(0.8927);">9/24/2025 5:48:12 PM</div>
<div class="t" style="left:500.5px;top:497px;transform:scaleX(0.9397);">Micros...</div>
<div class="t" style="left:587.64px;top:497px;transform-origin:100% 0;transform:scaleX(0.8570);">5379</div>
<div class="t" style="left:632px;top:497px;transform:scaleX(0.8754);">User A...</div>
<svg class="r" style="left:227px;top:515.9000000000001px;" width="20" height="20" viewBox="0 0 20 20"><path d="M8.5 9.5 L17.5 18" stroke="#c89430" stroke-width="3.4" stroke-linecap="round"/><path d="M8.5 9.5 L17.5 18" stroke="#f4c844" stroke-width="1.8" stroke-linecap="round"/><circle cx="6.3" cy="6.3" r="5.4" fill="#f4c844" stroke="#c89430" stroke-width="1.1"/><ellipse cx="5" cy="5" rx="2.2" ry="1.3" transform="rotate(-50 5 5)" fill="#fff" opacity="0.75"/></svg>
<div class="t" style="left:248px;top:518px;transform:scaleX(0.9040);">Audit Success</div>
<div class="t" style="left:336px;top:518px;transform:scaleX(0.8927);">9/24/2025 5:48:12 PM</div>
<div class="t" style="left:500.5px;top:518px;transform:scaleX(0.9397);">Micros...</div>
<div class="t" style="left:587.64px;top:518px;transform-origin:100% 0;transform:scaleX(0.8570);">5379</div>
<div class="t" style="left:632px;top:518px;transform:scaleX(0.8754);">User A...</div>
<svg class="r" style="left:227px;top:536.7px;" width="20" height="20" viewBox="0 0 20 20"><path d="M8.5 9.5 L17.5 18" stroke="#c89430" stroke-width="3.4" stroke-linecap="round"/><path d="M8.5 9.5 L17.5 18" stroke="#f4c844" stroke-width="1.8" stroke-linecap="round"/><circle cx="6.3" cy="6.3" r="5.4" fill="#f4c844" stroke="#c89430" stroke-width="1.1"/><ellipse cx="5" cy="5" rx="2.2" ry="1.3" transform="rotate(-50 5 5)" fill="#fff" opacity="0.75"/></svg>
<div class="t" style="left:248px;top:539px;transform:scaleX(0.9040);">Audit Success</div>
<div class="t" style="left:336px;top:539px;transform:scaleX(0.8927);">9/24/2025 5:48:12 PM</div>
<div class="t" style="left:500.5px;top:539px;transform:scaleX(0.9397);">Micros...</div>
<div class="t" style="left:587.64px;top:539px;transform-origin:100% 0;transform:scaleX(0.8570);">5379</div>
<div class="t" style="left:632px;top:539px;transform:scaleX(0.8754);">User A...</div>
<svg class="r" style="left:227px;top:557.5px;" width="20" height="20" viewBox="0 0 20 20"><path d="M8.5 9.5 L17.5 18" stroke="#c89430" stroke-width="3.4" stroke-linecap="round"/><path d="M8.5 9.5 L17.5 18" stroke="#f4c844" stroke-width="1.8" stroke-linecap="round"/><circle cx="6.3" cy="6.3" r="5.4" fill="#f4c844" stroke="#c89430" stroke-width="1.1"/><ellipse cx="5" cy="5" rx="2.2" ry="1.3" transform="rotate(-50 5 5)" fill="#fff" opacity="0.75"/></svg>
<div class="t" style="left:248px;top:560px;transform:scaleX(0.9040);">Audit Success</div>
<div class="t" style="left:336px;top:560px;transform:scaleX(0.8927);">9/24/2025 5:48:12 PM</div>
<div class="t" style="left:500.5px;top:560px;transform:scaleX(0.9397);">Micros...</div>
<div class="t" style="left:587.64px;top:560px;transform-origin:100% 0;transform:scaleX(0.8570);">5379</div>
<div class="t" style="left:632px;top:560px;transform:scaleX(0.8754);">User A...</div>
<svg class="r" style="left:227px;top:578.3px;" width="20" height="20" viewBox="0 0 20 20"><path d="M8.5 9.5 L17.5 18" stroke="#c89430" stroke-width="3.4" stroke-linecap="round"/><path d="M8.5 9.5 L17.5 18" stroke="#f4c844" stroke-width="1.8" stroke-linecap="round"/><circle cx="6.3" cy="6.3" r="5.4" fill="#f4c844" stroke="#c89430" stroke-width="1.1"/><ellipse cx="5" cy="5" rx="2.2" ry="1.3" transform="rotate(-50 5 5)" fill="#fff" opacity="0.75"/></svg>
<div class="t" style="left:248px;top:580px;transform:scaleX(0.9040);">Audit Success</div>
<div class="t" style="left:336px;top:580px;transform:scaleX(0.8927);">9/24/2025 5:48:12 PM</div>
<div class="t" style="left:500.5px;top:580px;transform:scaleX(0.9397);">Micros...</div>
<div class="t" style="left:587.64px;top:580px;transform-origin:100% 0;transform:scaleX(0.8570);">5379</div>
<div class="t" style="left:632px;top:580px;transform:scaleX(0.8754);">User A...</div>
<svg class="r" style="left:227px;top:599.1px;" width="20" height="20" viewBox="0 0 20 20"><path d="M8.5 9.5 L17.5 18" stroke="#c89430" stroke-width="3.4" stroke-linecap="round"/><path d="M8.5 9.5 L17.5 18" stroke="#f4c844" stroke-width="1.8" stroke-linecap="round"/><circle cx="6.3" cy="6.3" r="5.4" fill="#f4c844" stroke="#c89430" stroke-width="1.1"/><ellipse cx="5" cy="5" rx="2.2" ry="1.3" transform="rotate(-50 5 5)" fill="#fff" opacity="0.75"/></svg>
<div class="t" style="left:248px;top:601px;transform:scaleX(0.9040);">Audit Success</div>
<div class="t" style="left:336px;top:601px;transform:scaleX(0.8927);">9/24/2025 5:48:12 PM</div>
<div class="t" style="left:500.5px;top:601px;transform:scaleX(0.9397);">Micros...</div>
<div class="t" style="left:587.64px;top:601px;transform-origin:100% 0;transform:scaleX(0.8570);">5379</div>
<div class="t" style="left:632px;top:601px;transform:scaleX(0.8754);">User A...</div>
<svg class="r" style="left:227px;top:619.9000000000001px;" width="20" height="20" viewBox="0 0 20 20"><path d="M8.5 9.5 L17.5 18" stroke="#c89430" stroke-width="3.4" stroke-linecap="round"/><path d="M8.5 9.5 L17.5 18" stroke="#f4c844" stroke-width="1.8" stroke-linecap="round"/><circle cx="6.3" cy="6.3" r="5.4" fill="#f4c844" stroke="#c89430" stroke-width="1.1"/><ellipse cx="5" cy="5" rx="2.2" ry="1.3" transform="rotate(-50 5 5)" fill="#fff" opacity="0.75"/></svg>
<div class="t" style="left:248px;top:622px;transform:scaleX(0.9040);">Audit Success</div>
<div class="t" style="left:336px;top:622px;transform:scaleX(0.8927);">9/24/2025 5:48:12 PM</div>
<div class="t" style="left:500.5px;top:622px;transform:scaleX(0.9397);">Micros...</div>
<div class="t" style="left:587.64px;top:622px;transform-origin:100% 0;transform:scaleX(0.8570);">5379</div>
<div class="t" style="left:632px;top:622px;transform:scaleX(0.8754);">User A...</div>
<svg class="r" style="left:227px;top:640.7px;" width="20" height="20" viewBox="0 0 20 20"><path d="M8.5 9.5 L17.5 18" stroke="#c89430" stroke-width="3.4" stroke-linecap="round"/><path d="M8.5 9.5 L17.5 18" stroke="#f4c844" stroke-width="1.8" stroke-linecap="round"/><circle cx="6.3" cy="6.3" r="5.4" fill="#f4c844" stroke="#c89430" stroke-width="1.1"/><ellipse cx="5" cy="5" rx="2.2" ry="1.3" transform="rotate(-50 5 5)" fill="#fff" opacity="0.75"/></svg>
<div class="t" style="left:248px;top:643px;transform:scaleX(0.9040);">Audit Success</div>
<div class="t" style="left:336px;top:643px;transform:scaleX(0.8927);">9/24/2025 5:48:12 PM</div>
<div class="t" style="left:500.5px;top:643px;transform:scaleX(0.9397);">Micros...</div>
<div class="t" style="left:587.64px;top:643px;transform-origin:100% 0;transform:scaleX(0.8570);">5379</div>
<div class="t" style="left:632px;top:643px;transform:scaleX(0.8754);">User A...</div>
<svg class="r" style="left:227px;top:661.5px;" width="20" height="20" viewBox="0 0 20 20"><path d="M8.5 9.5 L17.5 18" stroke="#c89430" stroke-width="3.4" stroke-linecap="round"/><path d="M8.5 9.5 L17.5 18" stroke="#f4c844" stroke-width="1.8" stroke-linecap="round"/><circle cx="6.3" cy="6.3" r="5.4" fill="#f4c844" stroke="#c89430" stroke-width="1.1"/><ellipse cx="5" cy="5" rx="2.2" ry="1.3" transform="rotate(-50 5 5)" fill="#fff" opacity="0.75"/></svg>
<div class="t" style="left:248px;top:664px;transform:scaleX(0.9040);">Audit Success</div>
<div class="t" style="left:336px;top:664px;transform:scaleX(0.8927);">9/24/2025 5:48:12 PM</div>
<div class="t" style="left:500.5px;top:664px;transform:scaleX(0.9397);">Micros...</div>
<div class="t" style="left:587.64px;top:664px;transform-origin:100% 0;transform:scaleX(0.8570);">5379</div>
<div class="t" style="left:632px;top:664px;transform:scaleX(0.8754);">User A...</div>
<svg class="r" style="left:227px;top:682.3000000000001px;" width="20" height="20" viewBox="0 0 20 20"><path d="M8.5 9.5 L17.5 18" stroke="#c89430" stroke-width="3.4" stroke-linecap="round"/><path d="M8.5 9.5 L17.5 18" stroke="#f4c844" stroke-width="1.8" stroke-linecap="round"/><circle cx="6.3" cy="6.3" r="5.4" fill="#f4c844" stroke="#c89430" stroke-width="1.1"/><ellipse cx="5" cy="5" rx="2.2" ry="1.3" transform="rotate(-50 5 5)" fill="#fff" opacity="0.75"/></svg>
<div class="t" style="left:248px;top:684px;transform:scaleX(0.9040);">Audit Success</div>
<div class="t" style="left:336px;top:684px;transform:scaleX(0.8927);">9/24/2025 5:48:12 PM</div>
<div class="t" style="left:500.5px;top:684px;transform:scaleX(0.9397);">Micros...</div>
<div class="t" style="left:587.64px;top:684px;transform-origin:100% 0;transform:scaleX(0.8570);">5379</div>
<div class="t" style="left:632px;top:684px;transform:scaleX(0.8754);">User A...</div>
<svg class="r" style="left:227px;top:703.1px;" width="20" height="20" viewBox="0 0 20 20"><path d="M8.5 9.5 L17.5 18" stroke="#c89430" stroke-width="3.4" stroke-linecap="round"/><path d="M8.5 9.5 L17.5 18" stroke="#f4c844" stroke-width="1.8" stroke-linecap="round"/><circle cx="6.3" cy="6.3" r="5.4" fill="#f4c844" stroke="#c89430" stroke-width="1.1"/><ellipse cx="5" cy="5" rx="2.2" ry="1.3" transform="rotate(-50 5 5)" fill="#fff" opacity="0.75"/></svg>
<div class="t" style="left:248px;top:705px;transform:scaleX(0.9040);">Audit Success</div>
<div class="t" style="left:336px;top:705px;transform:scaleX(0.8927);">9/24/2025 5:48:12 PM</div>
<div class="t" style="left:500.5px;top:705px;transform:scaleX(0.9397);">Micros...</div>
<div class="t" style="left:587.64px;top:705px;transform-origin:100% 0;transform:scaleX(0.8570);">5379</div>
<div class="t" style="left:632px;top:705px;transform:scaleX(0.8754);">User A...</div>
<svg class="r" style="left:227px;top:723.9px;" width="20" height="20" viewBox="0 0 20 20"><path d="M8.5 9.5 L17.5 18" stroke="#c89430" stroke-width="3.4" stroke-linecap="round"/><path d="M8.5 9.5 L17.5 18" stroke="#f4c844" stroke-width="1.8" stroke-linecap="round"/><circle cx="6.3" cy="6.3" r="5.4" fill="#f4c844" stroke="#c89430" stroke-width="1.1"/><ellipse cx="5" cy="5" rx="2.2" ry="1.3" transform="rotate(-50 5 5)" fill="#fff" opacity="0.75"/></svg>
<div class="t" style="left:248px;top:726px;transform:scaleX(0.9040);">Audit Success</div>
<div class="t" style="left:336px;top:726px;transform:scaleX(0.8927);">9/24/2025 5:48:12 PM</div>
<div class="t" style="left:500.5px;top:726px;transform:scaleX(0.9397);">Micros...</div>
<div class="t" style="left:587.64px;top:726px;transform-origin:100% 0;transform:scaleX(0.8570);">5379</div>
<div class="t" style="left:632px;top:726px;transform:scaleX(0.8754);">User A...</div>
<svg class="r" style="left:227px;top:744.7px;" width="20" height="20" viewBox="0 0 20 20"><path d="M8.5 9.5 L17.5 18" stroke="#c89430" stroke-width="3.4" stroke-linecap="round"/><path d="M8.5 9.5 L17.5 18" stroke="#f4c844" stroke-width="1.8" stroke-linecap="round"/><circle cx="6.3" cy="6.3" r="5.4" fill="#f4c844" stroke="#c89430" stroke-width="1.1"/><ellipse cx="5" cy="5" rx="2.2" ry="1.3" transform="rotate(-50 5 5)" fill="#fff" opacity="0.75"/></svg>
<div class="t" style="left:248px;top:747px;transform:scaleX(0.9040);">Audit Success</div>
<div class="t" style="left:336px;top:747px;transform:scaleX(0.8927);">9/24/2025 5:48:12 PM</div>
<div class="t" style="left:500.5px;top:747px;transform:scaleX(0.9397);">Micros...</div>
<div class="t" style="left:587.64px;top:747px;transform-origin:100% 0;transform:scaleX(0.8570);">5379</div>
<div class="t" style="left:632px;top:747px;transform:scaleX(0.8754);">User A...</div>
<svg class="r" style="left:227px;top:765.5px;" width="20" height="20" viewBox="0 0 20 20"><path d="M8.5 9.5 L17.5 18" stroke="#c89430" stroke-width="3.4" stroke-linecap="round"/><path d="M8.5 9.5 L17.5 18" stroke="#f4c844" stroke-width="1.8" stroke-linecap="round"/><circle cx="6.3" cy="6.3" r="5.4" fill="#f4c844" stroke="#c89430" stroke-width="1.1"/><ellipse cx="5" cy="5" rx="2.2" ry="1.3" transform="rotate(-50 5 5)" fill="#fff" opacity="0.75"/></svg>
<div class="t" style="left:248px;top:768px;transform:scaleX(0.9040);">Audit Success</div>
<div class="t" style="left:336px;top:768px;transform:scaleX(0.8927);">9/24/2025 5:48:12 PM</div>
<div class="t" style="left:500.5px;top:768px;transform:scaleX(0.9397);">Micros...</div>
<div class="t" style="left:587.64px;top:768px;transform-origin:100% 0;transform:scaleX(0.8570);">5379</div>
<div class="t" style="left:632px;top:768px;transform:scaleX(0.8754);">User A...</div>
<svg class="r" style="left:227px;top:786.3000000000001px;" width="20" height="20" viewBox="0 0 20 20"><path d="M8.5 9.5 L17.5 18" stroke="#c89430" stroke-width="3.4" stroke-linecap="round"/><path d="M8.5 9.5 L17.5 18" stroke="#f4c844" stroke-width="1.8" stroke-linecap="round"/><circle cx="6.3" cy="6.3" r="5.4" fill="#f4c844" stroke="#c89430" stroke-width="1.1"/><ellipse cx="5" cy="5" rx="2.2" ry="1.3" transform="rotate(-50 5 5)" fill="#fff" opacity="0.75"/></svg>
<div class="t" style="left:248px;top:788px;transform:scaleX(0.9040);">Audit Success</div>
<div class="t" style="left:336px;top:788px;transform:scaleX(0.8927);">9/24/2025 5:48:12 PM</div>
<div class="t" style="left:500.5px;top:788px;transform:scaleX(0.9397);">Micros...</div>
<div class="t" style="left:587.64px;top:788px;transform-origin:100% 0;transform:scaleX(0.8570);">5379</div>
<div class="t" style="left:632px;top:788px;transform:scaleX(0.8754);">User A...</div>
<svg class="r" style="left:227px;top:807.1px;" width="20" height="20" viewBox="0 0 20 20"><path d="M8.5 9.5 L17.5 18" stroke="#c89430" stroke-width="3.4" stroke-linecap="round"/><path d="M8.5 9.5 L17.5 18" stroke="#f4c844" stroke-width="1.8" stroke-linecap="round"/><circle cx="6.3" cy="6.3" r="5.4" fill="#f4c844" stroke="#c89430" stroke-width="1.1"/><ellipse cx="5" cy="5" rx="2.2" ry="1.3" transform="rotate(-50 5 5)" fill="#fff" opacity="0.75"/></svg>
<div class="t" style="left:248px;top:809px;transform:scaleX(0.9040);">Audit Success</div>
<div class="t" style="left:336px;top:809px;transform:scaleX(0.8927);">9/24/2025 5:48:12 PM</div>
<div class="t" style="left:500.5px;top:809px;transform:scaleX(0.9397);">Micros...</div>
<div class="t" style="left:587.64px;top:809px;transform-origin:100% 0;transform:scaleX(0.8570);">5379</div>
<div class="t" style="left:632px;top:809px;transform:scaleX(0.8754);">User A...</div>
<div class="r" style="left:218px;top:822px;width:817px;height:149px;background:#f0f0f0"></div>
<div class="r" style="left:219px;top:821px;width:811px;height:1px;background:#6e6e6e"></div>
<div class="r" style="left:218px;top:829px;width:814px;height:142px;background:#f0f0f0;border-top:2px solid #8a8a8a;border-right:1px solid #e3e3e3"></div>
<div class="r" style="left:219px;top:829px;width:3px;height:142px;background:#8a8a8a"></div>
<div class="t" style="left:229.5px;top:834px;transform:scaleX(0.9200);">Event 4672, Microsoft Windows security auditing.</div>
<svg class="r" style="left:1008px;top:836px;" width="12" height="12" viewBox="0 0 12 12"><path d="M2 2 L10 10 M10 2 L2 10" stroke="#000" stroke-width="2.4" stroke-linecap="square"/></svg>
<div class="r" style="left:226px;top:854px;width:802px;height:2px;background:#a0a0a0"></div>
<div class="r" style="left:231px;top:863px;width:800px;height:108px;background:#f0f0f0;border-left:1px solid #e6e6e6"></div>
<div class="r" style="left:292px;top:865px;width:60px;height:22px;background:#f0f0f0;border:1px solid #d9d9d9"></div>
<div class="r" style="left:232px;top:863px;width:60px;height:25px;background:#fff;border:1px solid #d9d9d9;border-bottom:none"></div>
<div class="t" style="left:240px;top:865px;transform:scaleX(0.8713);">General</div>
<div class="t" style="left:297px;top:867px;transform:scaleX(0.8973);">Details</div>
<div class="r" style="left:235px;top:887px;width:785px;height:84px;background:#f0f0f0;border-top:1px solid #fff;border-left:1px solid #fff;border-right:1px solid #fff"></div>
<div class="r" style="left:248px;top:906px;width:736px;height:65px;background:#f0f0f0;border-top:2px solid #7a7a7a;border-left:1px solid #6e6e6e"></div>
<div class="t" style="left:251px;top:910px;transform:scaleX(0.9200);">Special privileges assigned to new logon.</div>
<div class="t" style="left:251px;top:942px;transform:scaleX(0.8993);">Subject:</div>
<div class="t" style="left:303.5px;top:958px;transform:scaleX(0.9200);">Security ID:</div>
<div class="t" style="left:461px;top:958px;transform:scaleX(0.9200);">SYSTEM</div>
<div class="r" style="left:966px;top:907px;width:17px;height:64px;background:#f0f0f0"></div>
<svg class="r" style="left:968px;top:912px;" width="13" height="9" viewBox="0 0 13 9"><path d="M2 7 L6.5 2.5 L11 7" fill="none" stroke="#606060" stroke-width="1.6"/></svg>
<div class="r" style="left:966px;top:926px;width:17px;height:45px;background:#cdcdcd"></div>
<div class="r" style="left:1035px;top:77px;width:1px;height:894px;background:#fafafa"></div>
<div class="r" style="left:1039px;top:83px;width:233px;height:888px;background:#fff;border-top:2px solid #8f8f8f;border-left:2px solid #9a9a9a"></div>
<div class="r" style="left:1041px;top:85px;width:231px;height:22px;background:#f0f0f0"></div>
<div class="r" style="left:1041px;top:107px;width:231px;height:2px;background:#c8c8c8"></div>
<div class="t" style="left:1047px;top:89px;transform:scaleX(0.8920);font-weight:bold">Actions</div>
<div class="r" style="left:1041px;top:109px;width:230px;height:27px;background:linear-gradient(#bcd4ec,#9ebad9)"></div>
<div class="t" style="left:1049px;top:115px;transform:scaleX(0.9055);">Security</div>
<svg class="r" style="left:1253px;top:119px;" width="11" height="8" viewBox="0 0 11 8"><path d="M0.5 7 L5.5 1 L10.5 7Z" fill="#000"/></svg>
<div class="t" style="left:1075.5px;top:142px;transform:scaleX(0.8872);">Open Saved Log...</div>
<svg class="r" style="left:1046px;top:140px;" width="18" height="18" viewBox="0 0 18 18"><path d="M1 5 H6 L7.5 3 H13 V14 H1Z" fill="#f5d98a" stroke="#c8a050" stroke-width="0.8"/><path d="M1 14 L4 8 H17 L13 14Z" fill="#f2cc6a" stroke="#c8a050" stroke-width="0.8"/><rect x="11" y="0" width="4" height="1.5" fill="#6c6"/></svg>
<div class="t" style="left:1075.5px;top:168px;transform:scaleX(0.9149);">Create Custom View...</div>
<svg class="r" style="left:1046px;top:167px;" width="18" height="18" viewBox="0 0 18 18"><path d="M1 2 H17 L11 9 V15 H8 V9Z" fill="#7f98ae" stroke="#5f7890" stroke-width="0.7"/><circle cx="5" cy="4" r="3.5" fill="#f6a020"/></svg>
<div class="t" style="left:1075.5px;top:194px;transform:scaleX(0.9438);">Import Custom View...</div>
<div class="t" style="left:1075.5px;top:221px;transform:scaleX(0.8926);">Clear Log...</div>
<div class="t" style="left:1075.5px;top:248px;transform:scaleX(0.9228);">Filter Current Log...</div>
<svg class="r" style="left:1046px;top:247px;" width="18" height="18" viewBox="0 0 18 18"><path d="M1 2 H17 L11 9 V15 H8 V9Z" fill="#7f98ae" stroke="#5f7890" stroke-width="0.7"/></svg>
<div class="t" style="left:1075.5px;top:274px;transform:scaleX(0.9136);">Properties</div>
<svg class="r" style="left:1046px;top:273px;" width="18" height="19" viewBox="0 0 18 19"><rect x="1.5" y="1.5" width="15.5" height="16.5" rx="2" fill="#eef0f2" stroke="#8c9298" stroke-width="1.2"/><rect x="3.5" y="4" width="11.5" height="10" fill="#e4ecf0" stroke="#b8c4cc" stroke-width="0.6"/><path d="M4 7 H14 M4 10 H14 M8 4 V14" stroke="#c0ccd4" stroke-width="0.6"/><rect x="6" y="5" width="3" height="3" fill="#9ad0e8"/><rect x="7" y="15" width="5" height="2" fill="#30b0a0"/></svg>
<div class="t" style="left:1075.5px;top:300px;transform:scaleX(0.9150);">Find...</div>
<svg class="r" style="left:1046px;top:300px;" width="19" height="19" viewBox="0 0 19 19"><path d="M1.5 16 V6 C1.5 2.5 3 1 4.5 1 C6 1 7.5 2.5 7.5 6 V16 Z" fill="#d8dadc" stroke="#3a3e44" stroke-width="1.6"/><path d="M10.5 16 V6 C10.5 2.5 12 1 13.5 1 C15 1 16.5 2.5 16.5 6 V16 Z" fill="#d8dadc" stroke="#3a3e44" stroke-width="1.6"/><rect x="7" y="5" width="4" height="5" fill="#444"/><rect x="1.5" y="11" width="6" height="6" fill="#5aa8e0" stroke="#2a5a8a" stroke-width="0.8"/><rect x="10.5" y="11" width="6" height="6" fill="#5aa8e0" stroke="#2a5a8a" stroke-width="0.8"/></svg>
<div class="t" style="left:1075.5px;top:327px;transform:scaleX(0.8839);">Save All Events As...</div>
<svg class="r" style="left:1046px;top:326px;" width="18" height="18" viewBox="0 0 18 18"><path d="M1.5 1.5 H15.5 L16.5 2.5 V16.5 H1.5Z" fill="#f4f4f4" stroke="#333" stroke-width="2"/><rect x="4" y="2" width="10" height="7" fill="#fcfcfc"/><rect x="2" y="10" width="14" height="6.5" fill="#3a3a3a"/><rect x="6" y="11.5" width="6" height="4" fill="#ddd"/><rect x="7" y="12" width="2" height="3" fill="#333"/></svg>
<div class="t" style="left:1075.5px;top:353px;transform:scaleX(0.9226);">Attach a Task To this Log...</div>
<div class="t" style="left:1075.5px;top:380px;transform:scaleX(0.9304);">View</div>
<svg class="r" style="left:1256px;top:383px;" width="8" height="11" viewBox="0 0 8 11"><path d="M0.6 0.3 L6.6 5.3 L0.6 10.3Z" fill="#000"/></svg>
<div class="t" style="left:1075.5px;top:408px;transform:scaleX(0.8709);">Refresh</div>
<svg class="r" style="left:1046px;top:406px;" width="19" height="19" viewBox="0 0 19 19"><path d="M3.3 1.5 H13 L16.6 5.1 V17.3 H3.3Z" fill="#f8f8f8" stroke="#9a9a9a" stroke-width="1.1"/><path d="M14.2 12.5 A4.6 4.6 0 1 1 12.6 6.6" fill="none" stroke="#30b030" stroke-width="2.4"/><path d="M11 12 L16.5 11 L14.8 16Z" fill="#20a020"/></svg>
<div class="t" style="left:1075.5px;top:435px;transform:scaleX(0.9584);">Help</div>
<svg class="r" style="left:1047.5px;top:434px;" width="16" height="19" viewBox="0 0 16 19"><defs><linearGradient id="ghh" x1="0" y1="0" x2="1" y2="0"><stop offset="0" stop-color="#1c3cb0"/><stop offset="0.5" stop-color="#5a7ce0"/><stop offset="1" stop-color="#3050c8"/></linearGradient></defs><rect x="0.5" y="1" width="14" height="17" fill="url(#ghh)" stroke="#23359a" stroke-width="0.8"/><text x="7.8" y="15" font-size="15" font-family="Liberation Sans" fill="#f0f4ff" text-anchor="middle">?</text></svg>
<svg class="r" style="left:1256px;top:438px;" width="8" height="11" viewBox="0 0 8 11"><path d="M0.6 0.3 L6.6 5.3 L0.6 10.3Z" fill="#000"/></svg>
<div class="r" style="left:1047px;top:216px;width:218px;height:1px;background:#e6e6e6"></div>
<div class="r" style="left:1047px;top:374px;width:218px;height:1px;background:#e6e6e6"></div>
<div class="r" style="left:1047px;top:402px;width:218px;height:1px;background:#e6e6e6"></div>
<div class="r" style="left:1047px;top:429px;width:218px;height:1px;background:#e6e6e6"></div>
<div class="r" style="left:1041px;top:462px;width:230px;height:27px;background:linear-gradient(#bcd4ec,#9ebad9)"></div>
<div class="t" style="left:1048.8px;top:467px;transform:scaleX(0.9157);">Event 4672, Microsoft Windows ...</div>
<svg class="r" style="left:1253px;top:472px;" width="11" height="8" viewBox="0 0 11 8"><path d="M0.5 7 L5.5 1 L10.5 7Z" fill="#000"/></svg>
<div class="t" style="left:1075.5px;top:494px;transform:scaleX(0.9014);">Event Properties</div>
<svg class="r" style="left:1046px;top:493px;" width="18" height="19" viewBox="0 0 18 19"><rect x="1.5" y="1.5" width="15.5" height="16.5" rx="2" fill="#eef0f2" stroke="#8c9298" stroke-width="1.2"/><rect x="3.5" y="4" width="11.5" height="10" fill="#e4ecf0" stroke="#b8c4cc" stroke-width="0.6"/><path d="M4 7 H14 M4 10 H14 M8 4 V14" stroke="#c0ccd4" stroke-width="0.6"/><rect x="6" y="5" width="3" height="3" fill="#9ad0e8"/><rect x="7" y="15" width="5" height="2" fill="#30b0a0"/></svg>
<div class="t" style="left:1075.5px;top:520px;transform:scaleX(0.9111);">Attach Task To This Event...</div>
<svg class="r" style="left:1046px;top:519px;" width="19" height="19" viewBox="0 0 19 19"><rect x="2.5" y="2" width="14.5" height="15" fill="#efefef" stroke="#8a8a8a"/><rect x="2.5" y="2" width="14.5" height="1.5" fill="#a07060"/><rect x="2.5" y="15.5" width="14.5" height="2" fill="#9a9a9a"/><circle cx="10" cy="9.5" r="5" fill="#fafafa" stroke="#6a7a80" stroke-width="1.2"/><path d="M10 9.5 V5.5 A4 4 0 0 1 13.8 8.5Z" fill="#e8c040"/><path d="M10 9.5 L7.5 11" stroke="#333" stroke-width="0.8"/><circle cx="3.5" cy="3.5" r="3" fill="#f8b020"/></svg>
<div class="t" style="left:1075.5px;top:547px;transform:scaleX(0.9606);">Copy</div>
<svg class="r" style="left:1046px;top:546px;" width="19" height="19" viewBox="0 0 19 19"><path d="M1.5 1.5 H7 L9.5 4 V12.5 H1.5Z" fill="#fff" stroke="#9a9a9a"/><path d="M7.5 6.5 H13 L16.5 10 V17.5 H7.5Z" fill="#fff" stroke="#9a9a9a"/><path d="M3 5 h3 M3 7 h4 M3 9 h4" stroke="#6080c0" stroke-width="0.7"/><path d="M9 10.5 h2 M9 12.5 h6 M9 14.5 h6" stroke="#4a70c0" stroke-width="0.8"/></svg>
<svg class="r" style="left:1256px;top:550px;" width="8" height="11" viewBox="0 0 8 11"><path d="M0.6 0.3 L6.6 5.3 L0.6 10.3Z" fill="#000"/></svg>
<div class="t" style="left:1075.5px;top:573px;transform:scaleX(0.8625);">Save Selected Events...</div>
<svg class="r" style="left:1046px;top:572px;" width="18" height="18" viewBox="0 0 18 18"><path d="M1.5 1.5 H15.5 L16.5 2.5 V16.5 H1.5Z" fill="#f4f4f4" stroke="#333" stroke-width="2"/><rect x="4" y="2" width="10" height="7" fill="#fcfcfc"/><rect x="2" y="10" width="14" height="6.5" fill="#3a3a3a"/><rect x="6" y="11.5" width="6" height="4" fill="#ddd"/><rect x="7" y="12" width="2" height="3" fill="#333"/></svg>
<div class="t" style="left:1075.5px;top:600px;transform:scaleX(0.8770);">Refresh</div>
<svg class="r" style="left:1046px;top:599px;" width="19" height="19" viewBox="0 0 19 19"><path d="M3.3 1.5 H13 L16.6 5.1 V17.3 H3.3Z" fill="#f8f8f8" stroke="#9a9a9a" stroke-width="1.1"/><path d="M14.2 12.5 A4.6 4.6 0 1 1 12.6 6.6" fill="none" stroke="#30b030" stroke-width="2.4"/><path d="M11 12 L16.5 11 L14.8 16Z" fill="#20a020"/></svg>
<div class="t" style="left:1075.5px;top:628px;transform:scaleX(0.9550);">Help</div>
<svg class="r" style="left:1047.5px;top:627px;" width="16" height="19" viewBox="0 0 16 19"><defs><linearGradient id="ghh" x1="0" y1="0" x2="1" y2="0"><stop offset="0" stop-color="#1c3cb0"/><stop offset="0.5" stop-color="#5a7ce0"/><stop offset="1" stop-color="#3050c8"/></linearGradient></defs><rect x="0.5" y="1" width="14" height="17" fill="url(#ghh)" stroke="#23359a" stroke-width="0.8"/><text x="7.8" y="15" font-size="15" font-family="Liberation Sans" fill="#f0f4ff" text-anchor="middle">?</text></svg>
<svg class="r" style="left:1256px;top:630px;" width="8" height="11" viewBox="0 0 8 11"><path d="M0.6 0.3 L6.6 5.3 L0.6 10.3Z" fill="#000"/></svg>
<div class="r" style="left:1047px;top:594px;width:218px;height:1px;background:#e6e6e6"></div>
<div class="r" style="left:1047px;top:622px;width:218px;height:1px;background:#e6e6e6"></div>
<div class="r" style="left:1271px;top:83px;width:1px;height:888px;background:#e8e8e8"></div>
<div class="r" style="left:340px;top:361px;width:595px;height:603px;background:#f0f0f0;border:1px solid #6e6e6e;border-left:2px solid #9a9a9a"></div>
<div class="r" style="left:342px;top:362px;width:592px;height:33px;background:#fff"></div>
<div class="t" style="left:351px;top:370px;transform:scaleX(0.9271);">Filter Current Log</div>
<svg class="r" style="left:911px;top:371px;" width="13" height="13" viewBox="0 0 13 13"><path d="M1 1 L12 12 M12 1 L1 12" stroke="#222" stroke-width="1.1"/></svg>
<div class="r" style="left:404px;top:404px;width:50px;height:23px;background:#f0f0f0;border:1px solid #d9d9d9;border-bottom:none"></div>
<div class="r" style="left:348px;top:401px;width:57px;height:27px;background:#fff;border:1px solid #d9d9d9;border-bottom:none"></div>
<div class="t" style="left:357.5px;top:405px;transform:scaleX(0.9157);">Filter</div>
<div class="t" style="left:409.5px;top:408px;transform:scaleX(0.9133);">XML</div>
<div class="r" style="left:348px;top:427px;width:567px;height:475px;background:#f0f0f0;border:1px solid #fff;border-top:1px solid #d9d9d9;border-left:1px solid #dadada"></div>
<div class="r" style="left:349px;top:428px;width:3px;height:473px;background:#fff"></div>
<div class="r" style="left:349px;top:426px;width:55px;height:2px;background:#fff"></div>
<div class="t" style="left:366px;top:442px;transform:scaleX(0.9326);">Logged:</div>
<div class="r" style="left:462px;top:441px;width:421px;height:25px;background:#e1e1e1;border:1px solid #adadad"></div>
<div class="t" style="left:466.5px;top:446px;transform:scaleX(0.9822);">Any time</div>
<svg class="r" style="left:866px;top:449px;" width="13" height="8" viewBox="0 0 13 8"><path d="M1.5 1.5 L6.5 6.5 L11.5 1.5" fill="none" stroke="#505050" stroke-width="1.2"/></svg>
<div class="t" style="left:366px;top:474px;transform:scaleX(0.8940);">Event level:</div>
<div class="r" style="left:462px;top:479.5px;width:14px;height:14px;background:#fff;border:1px solid #333"></div>
<div class="t" style="left:483px;top:478px;transform:scaleX(0.9607);">Critical</div>
<div class="r" style="left:537.5px;top:479.5px;width:14px;height:14px;background:#fff;border:1px solid #333"></div>
<div class="t" style="left:558px;top:478px;transform:scaleX(0.9705);">Warning</div>
<div class="r" style="left:642px;top:479.5px;width:14px;height:14px;background:#fff;border:1px solid #333"></div>
<div class="t" style="left:662.5px;top:478px;transform:scaleX(0.8856);">Verbose</div>
<div class="r" style="left:462px;top:511px;width:14px;height:14px;background:#fff;border:1px solid #333"></div>
<div class="t" style="left:483px;top:510px;transform:scaleX(0.8900);">Error</div>
<div class="r" style="left:537.5px;top:511px;width:14px;height:14px;background:#fff;border:1px solid #333"></div>
<div class="t" style="left:558.5px;top:510px;transform:scaleX(0.9836);">Information</div>
<svg class="r" style="left:362px;top:541px;" width="15" height="15" viewBox="0 0 15 15"><circle cx="7.5" cy="7.5" r="6.5" fill="#f4f4f4" stroke="#c6c6c6"/><circle cx="7.5" cy="7.5" r="3.5" fill="#c6c6c6"/></svg>
<div class="t" style="left:383.5px;top:541px;transform:scaleX(0.9378);color:#a0a0a0">By log</div>
<svg class="r" style="left:362px;top:577px;" width="15" height="15" viewBox="0 0 15 15"><circle cx="7.5" cy="7.5" r="6.5" fill="#fff" stroke="#c6c6c6"/></svg>
<div class="t" style="left:383.5px;top:576px;transform:scaleX(0.9076);color:#a0a0a0">By source</div>
<div class="t" style="left:462.5px;top:542px;transform:scaleX(0.9052);">Event logs:</div>
<div class="t" style="left:462.5px;top:576px;transform:scaleX(0.8844);">Event sources:</div>
<div class="r" style="left:558px;top:541px;width:294px;height:25px;background:#f0f0f0;border-top:2px solid #7a7a7a;border-left:2px solid #7a7a7a;border-bottom:1px solid #fff;border-right:1px solid #fff;box-shadow:0 0 0 1px #e3e3e3"></div>
<div class="t" style="left:561px;top:544px;transform:scaleX(0.9194);color:#8d8d8d">Security</div>
<div class="r" style="left:830px;top:545px;width:19px;height:18px;background:#efefef;border:2px solid #c8c8c8"></div>
<svg class="r" style="left:834px;top:552px;" width="10" height="6" viewBox="0 0 10 6"><path d="M0.5 0.5 H9.5 L5 5.5Z" fill="#a0a0a0"/></svg>
<div class="r" style="left:558px;top:577px;width:294px;height:24px;background:#fff;border-top:2px solid #7a7a7a;border-left:2px solid #7a7a7a;border-bottom:1px solid #fff;border-right:1px solid #fff;box-shadow:0 0 0 1px #e3e3e3"></div>
<div class="r" style="left:830px;top:580px;width:19px;height:19px;background:#e8e8e8;border:1px solid #c4c4c4;box-shadow:inset 0 0 0 1px #f6f6f6"></div>
<svg class="r" style="left:834px;top:587px;" width="10" height="6" viewBox="0 0 10 6"><path d="M0.5 0.5 H9.5 L5 5.5Z" fill="#000"/></svg>
<div class="t" style="left:366px;top:623px;transform:scaleX(0.9106);">Includes/Excludes Event IDs: Enter ID numbers and/or ID ranges separated by commas. To</div>
<div class="t" style="left:366px;top:640px;transform:scaleX(0.9113);">exclude criteria, type a minus sign first. For example 1,3,5-99,-76</div>
<div class="r" style="left:462px;top:676px;width:421px;height:26px;background:#fff;border:2px solid #6aaee6"></div>
<div class="t" style="left:465px;top:680px;transform:scaleX(0.8794);">4720</div>
<div class="r" style="left:491.5px;top:679.5px;width:1.2px;height:16px;background:#333"></div>
<div class="t" style="left:366.5px;top:710px;transform:scaleX(0.9062);">Task category:</div>
<div class="r" style="left:462px;top:710px;width:419px;height:24px;background:#f0f0f0;border-top:2px solid #7a7a7a;border-left:2px solid #7a7a7a;border-bottom:1px solid #fff;border-right:1px solid #fff;box-shadow:0 0 0 1px #e3e3e3"></div>
<div class="r" style="left:860px;top:714px;width:19px;height:18px;background:#efefef;border:2px solid #c8c8c8"></div>
<svg class="r" style="left:864px;top:720px;" width="10" height="6" viewBox="0 0 10 6"><path d="M0.5 0.5 H9.5 L5 5.5Z" fill="#a0a0a0"/></svg>
<div class="t" style="left:366.5px;top:747px;transform:scaleX(0.8996);">Keywords:</div>
<div class="r" style="left:462px;top:747px;width:419px;height:23px;background:#fff;border-top:2px solid #7a7a7a;border-left:2px solid #7a7a7a;border-bottom:1px solid #fff;border-right:1px solid #fff;box-shadow:0 0 0 1px #e3e3e3"></div>
<div class="r" style="left:860px;top:750px;width:19px;height:18px;background:#e8e8e8;border:1px solid #c4c4c4;box-shadow:inset 0 0 0 1px #f6f6f6"></div>
<svg class="r" style="left:864px;top:756px;" width="10" height="6" viewBox="0 0 10 6"><path d="M0.5 0.5 H9.5 L5 5.5Z" fill="#000"/></svg>
<div class="t" style="left:366.5px;top:790px;transform:scaleX(0.8400);">User:</div>
<div class="r" style="left:462px;top:790px;width:421px;height:25px;background:#fff;border:1px solid #7a7a7a"></div>
<div class="t" style="left:466px;top:793px;transform:scaleX(0.8983);">&lt;All Users&gt;</div>
<div class="t" style="left:366.5px;top:822px;transform:scaleX(0.9377);">Computer(s):</div>
<div class="r" style="left:462px;top:822px;width:421px;height:25px;background:#fff;border:1px solid #7a7a7a"></div>
<div class="t" style="left:466px;top:826px;transform:scaleX(0.9474);">&lt;All Computers&gt;</div>
<div class="r" style="left:813px;top:860px;width:80px;height:23px;background:#e1e1e1;border:1px solid #adadad"></div>
<div class="t" style="left:837px;top:864px;transform:scaleX(0.8814);">Clear</div>
<div class="r" style="left:747px;top:925px;width:80px;height:25px;background:#e1e1e1;border:2px solid #0078d7"></div>
<div class="t" style="left:777.5px;top:928px;transform:scaleX(0.8698);">OK</div>
<div class="r" style="left:835px;top:925px;width:80px;height:25px;background:#e1e1e1;border:1px solid #adadad"></div>
<div class="t" style="left:855.5px;top:928px;transform:scaleX(0.9061);">Cancel</div>
</body></html>
